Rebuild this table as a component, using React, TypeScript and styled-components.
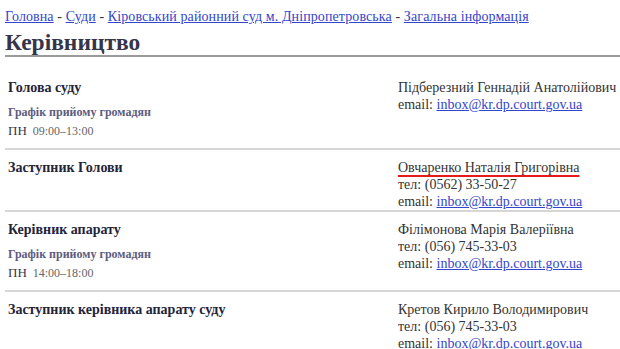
import React from "react";
import styled, { createGlobalStyle } from "styled-components";

const Global = createGlobalStyle`
  html, body { margin: 0; padding: 0; background: #fff; }
  body { font-family: "Liberation Serif", "Times New Roman", serif; color: #333; }
`;

const Page = styled.div`
  padding: 8px 0 0 5px;
  font-size: 14px;
  line-height: 18px;
`;

const Crumbs = styled.div`
  color: #333;
  white-space: nowrap;
  letter-spacing: 0.1px;
`;

const Link = styled.a`
  color: #3445cc;
  text-decoration: underline;
`;

const Title = styled.h1`
  margin: 3px 0 13px;
  font-size: 23.5px;
  line-height: 26px;
  font-weight: bold;
  color: #35354a;
  border-bottom: 2px solid #9a9a9a;
`;

const Row = styled.div`
  display: grid;
  grid-template-columns: 390px 1fr;
  padding: 9px 0 0 3px;
  line-height: 17px;
  border-bottom: 2px solid #d6d6d6;
  &:last-child { border-bottom: none; }
`;

const Left = styled.div`
  padding-bottom: 7px;
`;

const Role = styled.div`
  font-weight: bold;
  color: #23233a;
`;

const ScheduleTitle = styled.div`
  margin-top: 8px;
  font-size: 12px;
  font-weight: bold;
  color: #5c5c80;
`;

const ScheduleLine = styled.div`
  font-size: 13px;
  line-height: 19px;
  color: #33334a;
`;

const Time = styled.span`
  margin-left: 6px;
  font-size: 12px;
  color: #666;
`;

const Right = styled.div`
  white-space: nowrap;
`;

const Name = styled.div<{ $marked?: boolean }>`
  color: #333;
  ${(p) =>
    p.$marked &&
    `
    span {
      text-decoration: underline;
      text-decoration-color: #e51a1a;
      text-decoration-thickness: 2px;
      text-underline-offset: 3px;
    }
  `}
`;

const Line = styled.div`
  color: #333;
`;

type Person = {
  role: string;
  schedule?: string;
  name: string;
  phone?: string;
  marked?: boolean;
};

const people: Person[] = [
  { role: "Голова суду", schedule: "09:00–13:00", name: "Підберезний Геннадій Анатолійович" },
  { role: "Заступник Голови", name: "Овчаренко Наталія Григорівна", phone: "(0562) 33-50-27", marked: true },
  { role: "Керівник апарату", schedule: "14:00–18:00", name: "Філімонова Марія Валеріївна", phone: "(056) 745-33-03" },
  { role: "Заступник керівника апарату суду", name: "Кретов Кирило Володимирович", phone: "(056) 745-33-03" },
];

export default function App() {
  return (
    <Page>
      <Global />
      <Crumbs>
        <Link href="#">Головна</Link> - <Link href="#">Суди</Link> -{" "}
        <Link href="#">Кіровський районний суд м. Дніпропетровська</Link> -{" "}
        <Link href="#">Загальна інформація</Link>
      </Crumbs>
      <Title>Керівництво</Title>
      {people.map((p) => (
        <Row key={p.role}>
          <Left>
            <Role>{p.role}</Role>
            {p.schedule && (
              <>
                <ScheduleTitle>Графік прийому громадян</ScheduleTitle>
                <ScheduleLine>
                  ПН<Time>{p.schedule}</Time>
                </ScheduleLine>
              </>
            )}
          </Left>
          <Right>
            <Name $marked={p.marked}>
              <span>{p.name}</span>
            </Name>
            {p.phone && <Line>тел: {p.phone}</Line>}
            <Line>
              email: <Link href="#">inbox@kr.dp.court.gov.ua</Link>
            </Line>
          </Right>
        </Row>
      ))}
    </Page>
  );
}
